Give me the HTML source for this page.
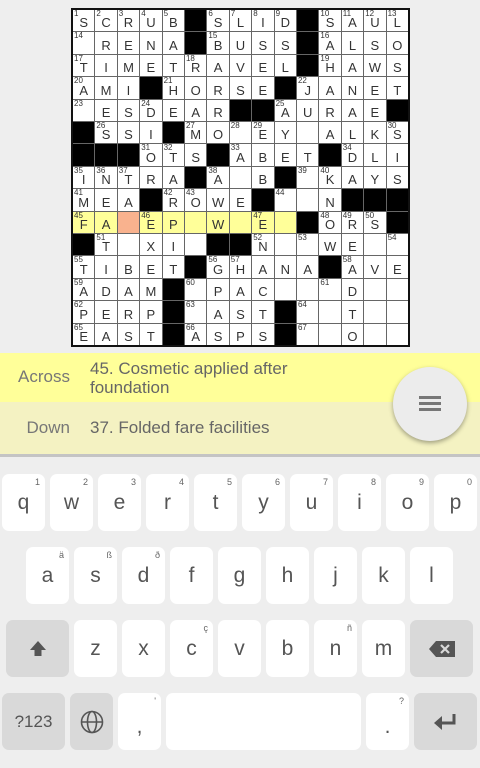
<!DOCTYPE html><html><head><style>
body{margin:0;width:480px;height:768px;background:#eee;font-family:"Liberation Sans",sans-serif;position:relative;overflow:hidden}
#g{position:absolute;left:71px;top:8px;width:335px;height:335px;border:2px solid #111;background:#666;display:grid;grid-template-columns:repeat(15,1fr);grid-template-rows:repeat(15,1fr);gap:1px}
#g b{background:#fff;position:relative;font-weight:normal;font-size:13px;color:#333;display:flex;align-items:flex-end;justify-content:center;padding-bottom:1px;line-height:14px}
#g b.k{background:#000}#g b.y{background:#ffff99}#g b.p{background:#f9b28e}
#g i{position:absolute;left:1px;top:0;font-style:normal;font-size:8px;line-height:8px;color:#333}
.cl{position:absolute;left:0;width:480px;color:#777;font-size:17px}
.cl span{position:absolute;left:90px;color:#666;line-height:19px}
.cl em{position:absolute;font-style:normal;right:410px}
.key{position:absolute;width:43px;height:57px;background:#fff;border-radius:7px;color:#555;font-size:21px;display:flex;align-items:center;justify-content:center}
.key.d{background:#d9d9d9}
.key sup{position:absolute;right:5px;top:4px;font-size:9px;line-height:9px;color:#666}
</style></head><body>
<div id="g">
<b><i>1</i>S</b><b><i>2</i>C</b><b><i>3</i>R</b><b><i>4</i>U</b><b><i>5</i>B</b><b class="k"></b><b><i>6</i>S</b><b><i>7</i>L</b><b><i>8</i>I</b><b><i>9</i>D</b><b class="k"></b><b><i>10</i>S</b><b><i>11</i>A</b><b><i>12</i>U</b><b><i>13</i>L</b>
<b><i>14</i></b><b>R</b><b>E</b><b>N</b><b>A</b><b class="k"></b><b><i>15</i>B</b><b>U</b><b>S</b><b>S</b><b class="k"></b><b><i>16</i>A</b><b>L</b><b>S</b><b>O</b>
<b><i>17</i>T</b><b>I</b><b>M</b><b>E</b><b>T</b><b><i>18</i>R</b><b>A</b><b>V</b><b>E</b><b>L</b><b class="k"></b><b><i>19</i>H</b><b>A</b><b>W</b><b>S</b>
<b><i>20</i>A</b><b>M</b><b>I</b><b class="k"></b><b><i>21</i>H</b><b>O</b><b>R</b><b>S</b><b>E</b><b class="k"></b><b><i>22</i>J</b><b>A</b><b>N</b><b>E</b><b>T</b>
<b><i>23</i></b><b>E</b><b>S</b><b><i>24</i>D</b><b>E</b><b>A</b><b>R</b><b class="k"></b><b class="k"></b><b><i>25</i>A</b><b>U</b><b>R</b><b>A</b><b>E</b><b class="k"></b>
<b class="k"></b><b><i>26</i>S</b><b>S</b><b>I</b><b class="k"></b><b><i>27</i>M</b><b>O</b><b><i>28</i></b><b><i>29</i>E</b><b>Y</b><b></b><b>A</b><b>L</b><b>K</b><b><i>30</i>S</b>
<b class="k"></b><b class="k"></b><b class="k"></b><b><i>31</i>O</b><b><i>32</i>T</b><b>S</b><b class="k"></b><b><i>33</i>A</b><b>B</b><b>E</b><b>T</b><b class="k"></b><b><i>34</i>D</b><b>L</b><b>I</b>
<b><i>35</i>I</b><b><i>36</i>N</b><b><i>37</i>T</b><b>R</b><b>A</b><b class="k"></b><b><i>38</i>A</b><b></b><b>B</b><b class="k"></b><b><i>39</i></b><b><i>40</i>K</b><b>A</b><b>Y</b><b>S</b>
<b><i>41</i>M</b><b>E</b><b>A</b><b class="k"></b><b><i>42</i>R</b><b><i>43</i>O</b><b>W</b><b>E</b><b class="k"></b><b><i>44</i></b><b></b><b>N</b><b class="k"></b><b class="k"></b><b class="k"></b>
<b class="y"><i>45</i>F</b><b class="y">A</b><b class="p"></b><b class="y"><i>46</i>E</b><b class="y">P</b><b class="y"></b><b class="y">W</b><b class="y"></b><b class="y"><i>47</i>E</b><b class="y"></b><b class="k"></b><b><i>48</i>O</b><b><i>49</i>R</b><b><i>50</i>S</b><b class="k"></b>
<b class="k"></b><b><i>51</i>T</b><b></b><b>X</b><b>I</b><b></b><b class="k"></b><b class="k"></b><b><i>52</i>N</b><b></b><b><i>53</i></b><b>W</b><b>E</b><b></b><b><i>54</i></b>
<b><i>55</i>T</b><b>I</b><b>B</b><b>E</b><b>T</b><b class="k"></b><b><i>56</i>G</b><b><i>57</i>H</b><b>A</b><b>N</b><b>A</b><b class="k"></b><b><i>58</i>A</b><b>V</b><b>E</b>
<b><i>59</i>A</b><b>D</b><b>A</b><b>M</b><b class="k"></b><b><i>60</i></b><b>P</b><b>A</b><b>C</b><b></b><b></b><b><i>61</i></b><b>D</b><b></b><b></b>
<b><i>62</i>P</b><b>E</b><b>R</b><b>P</b><b class="k"></b><b><i>63</i></b><b>A</b><b>S</b><b>T</b><b class="k"></b><b><i>64</i></b><b></b><b>T</b><b></b><b></b>
<b><i>65</i>E</b><b>A</b><b>S</b><b>T</b><b class="k"></b><b><i>66</i>A</b><b>S</b><b>P</b><b>S</b><b class="k"></b><b><i>67</i></b><b></b><b>O</b><b></b><b></b>
</div>
<div class="cl" style="top:353px;height:49px;background:#ffff99"><em style="top:14px">Across</em><span style="top:6px">45. Cosmetic applied after<br>foundation</span></div>
<div class="cl" style="top:402px;height:52px;background:#f4f2c2"><em style="top:16px">Down</em><span style="top:16px">37. Folded fare facilities</span></div>
<div style="position:absolute;top:454px;left:0;width:480px;height:3px;background:#c4c4c4"></div>
<div style="position:absolute;left:393px;top:367px;width:74px;height:74px;border-radius:50%;background:#ececec;box-shadow:0 2px 5px rgba(0,0,0,.35)"><div style="position:absolute;left:26px;top:29px;width:22px;height:3px;background:#777;box-shadow:0 6px 0 #777,0 12px 0 #777"></div></div>

<div class="key" style="left:2px;top:474px">q<sup>1</sup></div>
<div class="key" style="left:50px;top:474px">w<sup>2</sup></div>
<div class="key" style="left:98px;top:474px">e<sup>3</sup></div>
<div class="key" style="left:146px;top:474px">r<sup>4</sup></div>
<div class="key" style="left:194px;top:474px">t<sup>5</sup></div>
<div class="key" style="left:242px;top:474px">y<sup>6</sup></div>
<div class="key" style="left:290px;top:474px">u<sup>7</sup></div>
<div class="key" style="left:338px;top:474px">i<sup>8</sup></div>
<div class="key" style="left:386px;top:474px">o<sup>9</sup></div>
<div class="key" style="left:434px;top:474px">p<sup>0</sup></div>

<div class="key" style="left:26px;top:547px">a<sup>ä</sup></div>
<div class="key" style="left:74px;top:547px">s<sup>ß</sup></div>
<div class="key" style="left:122px;top:547px">d<sup>ð</sup></div>
<div class="key" style="left:170px;top:547px">f</div>
<div class="key" style="left:218px;top:547px">g</div>
<div class="key" style="left:266px;top:547px">h</div>
<div class="key" style="left:314px;top:547px">j</div>
<div class="key" style="left:362px;top:547px">k</div>
<div class="key" style="left:410px;top:547px">l</div>

<div class="key d" style="left:6px;top:620px;width:63px"><svg width="20" height="20" viewBox="0 0 20 20"><path d="M10 2 L18 11 H13.5 V17 H6.5 V11 H2 Z" fill="#555"/></svg></div>
<div class="key" style="left:74px;top:620px">z</div>
<div class="key" style="left:122px;top:620px">x</div>
<div class="key" style="left:170px;top:620px">c<sup>ç</sup></div>
<div class="key" style="left:218px;top:620px">v</div>
<div class="key" style="left:266px;top:620px">b</div>
<div class="key" style="left:314px;top:620px">n<sup>ñ</sup></div>
<div class="key" style="left:362px;top:620px">m</div>
<div class="key d" style="left:410px;top:620px;width:63px"><svg width="26" height="16" viewBox="0 0 26 16"><path d="M0 8 L7 0 H26 V16 H7 Z" fill="#555"/><path d="M12 4 L20 12 M20 4 L12 12" stroke="#d9d9d9" stroke-width="2.2"/></svg></div>

<div class="key d" style="left:2px;top:693px;width:63px;font-size:17px">?123</div>
<div class="key d" style="left:70px;top:693px"><svg width="24" height="24" viewBox="0 0 24 24" fill="none" stroke="#555" stroke-width="1.6"><circle cx="12" cy="12" r="10.5"/><ellipse cx="12" cy="12" rx="4.5" ry="10.5"/><path d="M1.5 12 H22.5"/></svg></div>
<div class="key" style="left:118px;top:693px;padding-top:10px;box-sizing:border-box">,<sup>'</sup></div>
<div class="key" style="left:166px;top:693px;width:195px"></div>
<div class="key" style="left:366px;top:693px;padding-top:10px;box-sizing:border-box">.<sup>?</sup></div>
<div class="key d" style="left:414px;top:693px;width:63px"><svg width="24" height="18" viewBox="0 0 24 18"><path d="M20 1 V10 H8" stroke="#555" stroke-width="3" fill="none"/><path d="M0 10 L8 3 V17 Z" fill="#555"/></svg></div>
</body></html>
